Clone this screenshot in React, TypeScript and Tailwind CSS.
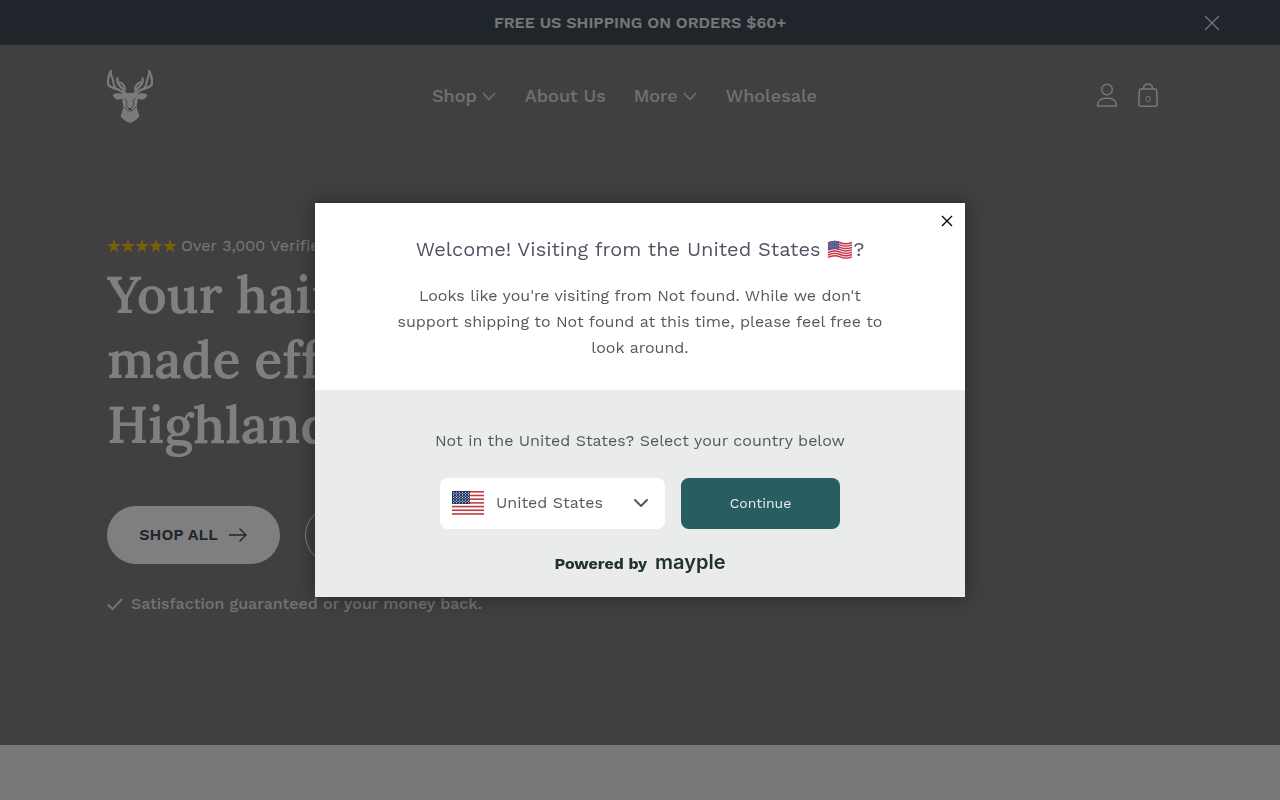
import { useState } from "react";
import { ChevronDown } from "lucide-react";

const NAV_LINKS = [
  { label: "Shop", menu: true },
  { label: "About Us", menu: false },
  { label: "More", menu: true },
  { label: "Wholesale", menu: false },
];

const COUNTRIES = ["United States", "Canada", "United Kingdom", "Australia"];

function Antler() {
  return (
    <g fill="none" stroke="currentColor" strokeLinecap="round" strokeLinejoin="round">
      <path d="M62 49C57 62 50 76 55 89C59 99 77 99 89 106L103 116" strokeWidth="7" />
      <path d="M62 49C61 58 66 67 69 75C71 84 68 89 77 99" strokeWidth="6" />
      <path d="M82 70C80 84 87 91 95 98C101 103 103 108 106 116" strokeWidth="7" />
      <path d="M89 82C99 85 104 92 105 103" strokeWidth="6" />
    </g>
  );
}

function DeerLogo() {
  return (
    <svg viewBox="51 45 138 162" className="h-[54px] w-[46px]" aria-hidden="true">
      <Antler />
      <g transform="translate(240 0) scale(-1 1)">
        <Antler />
      </g>
      <path
        d="M68 119Q80 112 97 117L106 114H134L143 117Q160 112 172 119Q169 132 154 134L143 131Q143 144 140 151Q139 161 144 170L148 184Q137 200 120 204Q103 200 92 184L96 170Q101 161 100 151Q97 144 97 131L86 134Q71 132 68 119Z"
        fill="currentColor"
      />
      <g fill="none" stroke="#808080" strokeWidth="2.500" strokeLinejoin="round">
        <path d="M103 129L109 135Q112 141 109 149L113 158" />
        <path d="M137 129L131 135Q128 141 131 149L127 158" />
        <path d="M103 156Q107 163 112 166L120 169L128 166Q133 163 137 156" />
      </g>
      <path d="M113 157L120 160L127 157L124 165H116Z" fill="#808080" />
    </svg>
  );
}

function Stars() {
  return (
    <span className="flex text-[#f5bf14]" aria-hidden="true">
      {[1, 2, 3, 4, 5].map((n) => (
        <svg key={n} viewBox="0 0 14 14" className="h-3.5 w-3.5" fill="currentColor">
          <path d="M7 0.3L8.7 5.1H13.7L9.7 8.2L11.2 13.2L7 10.2L2.8 13.2L4.3 8.2L0.3 5.1H5.3Z" />
        </svg>
      ))}
    </span>
  );
}

function FlagBox() {
  return (
    <svg viewBox="0 0 32 24" className="h-6 w-8" aria-hidden="true">
      <path fill="#fff" d="M0 0h32v24H0z" />
      {[0, 2, 4, 6, 8, 10, 12].map((row) => (
        <rect key={row} y={(row * 24) / 13} width="32" height="1.6" fill="#bd3d44" />
      ))}
      <path fill="#192f5d" d="M0 0h18v12.9H0z" />
      {[0, 1, 2, 3, 4, 5, 6, 7, 8].map((row) =>
        [0, 1, 2, 3, 4, 5].map((col) => (
          <circle
            key={`${row}-${col}`}
            cx={1.5 + col * 3 + (row % 2) * 1.5}
            cy={1.3 + row * 1.3}
            r="0.55"
            fill="#fff"
          />
        ))
      )}
    </svg>
  );
}

function WavyFlag() {
  return (
    <svg viewBox="0 0 26 20" className="inline-block h-5 w-[26px] align-[-4px]" role="img" aria-label="US flag">
      <path fill="#f5f0f2" d="M1 2.5Q7-.5 13 2T25 2V17Q19 20 13 17.500T1 17.500Z" />
      <g fill="none" stroke="#c8324a" strokeWidth="1.4">
        {[0, 2.4, 4.8, 7.2, 9.6, 12, 14.400].map((y) => (
          <path key={y} d={`M1 ${y + 3}Q7 ${y} 13 ${y + 2.5}T25 ${y + 2.5}`} />
        ))}
      </g>
      <path fill="#5a5a92" d="M1 2.500Q7-.5 12 1.600V9.600Q7 7.500 1 10Z" />
      <g fill="none" stroke="#9a9ac0" strokeWidth="0.7" strokeDasharray="0.8 1.2">
        <path d="M2 4Q7 1.500 11.500 3.500M2 6Q7 3.500 11.500 5.500M2 8Q7 5.500 11.500 7.500" />
      </g>
    </svg>
  );
}

function Storefront() {
  return (
    <div className="flex min-h-screen flex-col bg-[#eeeeee]">
      <div className="flex h-[45px] items-center bg-[#404a58] px-[60px]">
        <p className="flex-1 pl-4 text-center text-base font-semibold text-[#eeeeee]">
          FREE US SHIPPING ON ORDERS $60+
        </p>
        <button type="button" aria-label="Dismiss announcement" className="text-[#eeeeee]">
          <svg viewBox="0 0 16 16" className="h-4 w-4" fill="none" stroke="currentColor" strokeWidth="1.2">
            <path d="M1 1L15 15M15 1L1 15" />
          </svg>
        </button>
      </div>

      <div className="border-b border-[#f5f5f5] bg-[#808080] pr-[122px] pl-[107px]">
        <header className="flex h-[103px] items-center justify-between">
          <a href="#home" aria-label="Home" className="text-[#f4f4f4]">
            <DeerLogo />
          </a>
          <nav className="flex items-center gap-7 pb-0.5 text-lg font-medium text-[#e2e2e2]">
            {NAV_LINKS.map((link) => (
              <a key={link.label} href="#nav" className="flex items-center gap-1">
                {link.label}
                {link.menu && (
                  <svg viewBox="0 0 16 16" className="h-4 w-4" fill="none" stroke="currentColor" strokeWidth="1.500">
                    <path d="M2 5L8 11.500L14 5" />
                  </svg>
                )}
              </a>
            ))}
          </nav>
          <div className="flex items-center gap-5 pb-[3px] text-[#eeeeee]">
            <a href="#account" aria-label="Account">
              <svg viewBox="0 0 22 24" className="h-6 w-[22px]" fill="none" stroke="currentColor" strokeWidth="1.400">
                <circle cx="11" cy="6.500" r="5.300" />
                <path d="M1.500 23C1.500 18 5 15.200 9 15.200H13C17 15.200 20.500 18 20.500 23Z" strokeLinejoin="round" />
              </svg>
            </a>
            <a href="#cart" aria-label="Cart" className="relative">
              <svg viewBox="0 0 20 24" className="h-6 w-5" fill="none" stroke="currentColor" strokeWidth="1.500">
                <path d="M3 6H17Q18.500 6 18.600 7.500L19.200 21Q19.200 23.200 17 23.200H3Q.8 23.200.8 21L1.400 7.500Q1.500 6 3 6Z" />
                <path d="M5.500 6C5.500 2.500 7 1 10 1S14.500 2.500 14.500 6" />
              </svg>
              <span className="absolute inset-x-0 top-2 text-center text-[10px] leading-4">0</span>
            </a>
          </div>
        </header>

        <main className="pt-[86px] pb-[129px]">
          <div className="mb-1 flex h-6 items-center gap-1 text-base text-[#eeeeee]">
            <Stars />
            Over 3,000 Verified Reviews
          </div>
          <h1 className="font-['Lora','Liberation_Serif',serif] text-[52px] leading-[65px] font-semibold text-white">
            Your haircare
            <br />
            made effortless
            <br />
            Highland style
          </h1>
          <div className="mt-[49px] flex gap-[25px]">
            <a
              href="#shop"
              className="flex h-[58px] w-[173px] items-center justify-center gap-2.5 rounded-full bg-white text-base font-semibold text-[#404a58]"
            >
              SHOP ALL
              <svg viewBox="0 0 20 16" className="h-4 w-5" fill="none" stroke="currentColor" strokeWidth="1.400">
                <path d="M1 8H18M11.500 1.500L18 8L11.500 14.500" />
              </svg>
            </a>
            <a
              href="#about"
              className="flex h-[58px] items-center rounded-full border border-white px-8 text-base font-semibold text-white"
            >
              LEARN MORE
            </a>
          </div>
          <p className="mt-7 flex h-6 items-center gap-2 text-base font-medium text-[#e6e6e6]">
            <svg viewBox="0 0 16 16" className="h-4 w-4" fill="none" stroke="currentColor" strokeWidth="2">
              <path d="M.8 8.500L5.500 13L15.200 3" />
            </svg>
            Satisfaction guaranteed or your money back.
          </p>
        </main>
      </div>
    </div>
  );
}

function CountryModal({ onClose }: { onClose: () => void }) {
  const [country, setCountry] = useState("United States");

  return (
    <div className="fixed inset-0 flex items-center justify-center bg-black/50">
      <div
        role="dialog"
        aria-modal="true"
        aria-labelledby="geo-title"
        className="relative w-full max-w-[650px] bg-white text-center text-base text-[#54595f] shadow-[0_0_20px_rgba(0,0,0,0.4)]"
      >
        <button type="button" aria-label="Close" onClick={onClose} className="absolute top-3 right-3 text-black">
          <svg viewBox="0 0 12 12" className="h-3 w-3" fill="none" stroke="currentColor" strokeWidth="1.300">
            <path d="M1 1L11 11M11 1L1 11" />
          </svg>
        </button>

        <div className="px-20 pt-8 pb-[29px]">
          <h2 id="geo-title" className="mb-5 text-xl text-[#4f5362]">
            Welcome! Visiting from the United States <WavyFlag />?
          </h2>
          <p className="leading-[26px]">
            Looks like you're visiting from Not found. While we don't support shipping to Not found at this time,
            please feel free to look around.
          </p>
        </div>

        <div className="bg-[#e9eceb] px-20 pt-[38px] pb-[22px]">
          <label htmlFor="country" className="block leading-[26px]">
            Not in the United States? Select your country below
          </label>
          <div className="mt-6 flex justify-center gap-4">
            <div className="relative">
              <select
                id="country"
                value={country}
                onChange={(e) => setCountry(e.target.value)}
                className="h-[51px] w-[225px] appearance-none rounded-lg bg-white pr-10 pb-0.5 pl-14"
              >
                {COUNTRIES.map((name) => (
                  <option key={name}>{name}</option>
                ))}
              </select>
              <span className="pointer-events-none absolute inset-y-0 left-3 flex items-center pb-0.5">
                <FlagBox />
              </span>
              <span className="pointer-events-none absolute inset-y-0 right-3 flex items-center pb-0.5">
                <ChevronDown className="h-6 w-6" strokeWidth={2} />
              </span>
            </div>
            <button
              type="button"
              onClick={onClose}
              className="h-[51px] w-[159px] rounded-lg bg-[#285d62] pb-0.5 text-sm text-[#eaf1f0]"
            >
              Continue
            </button>
          </div>
          <p className="mt-5 flex h-[26px] items-baseline justify-center gap-2 font-bold text-[#22332b]">
            Powered by
            <a href="#mayple" className="font-['Inter',sans-serif] text-xl leading-[26px] font-semibold">
              mayple
            </a>
          </p>
        </div>
      </div>
    </div>
  );
}

export default function App() {
  const [open, setOpen] = useState(true);

  return (
    <div className="font-['Work_Sans','Inter',sans-serif]">
      <Storefront />
      {open && <CountryModal onClose={() => setOpen(false)} />}
    </div>
  );
}
